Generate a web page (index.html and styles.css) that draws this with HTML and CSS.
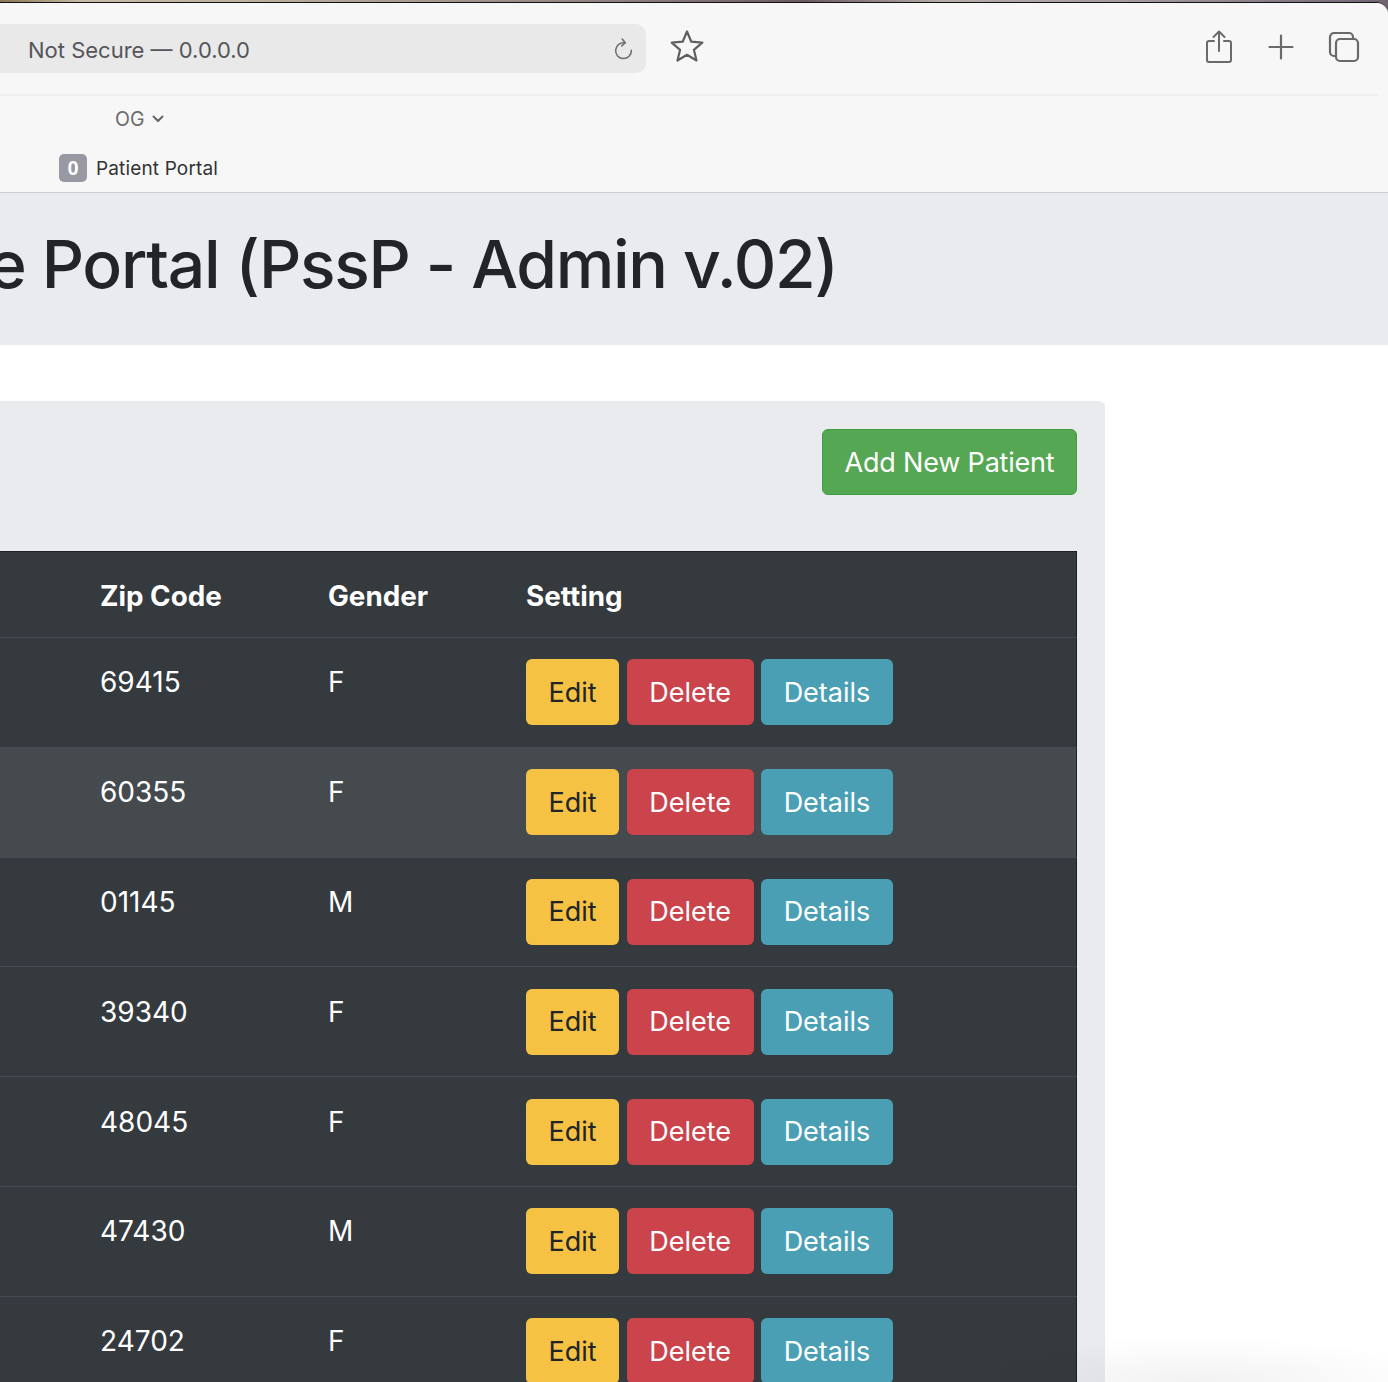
FILE: index.html
```html
<!DOCTYPE html>
<html lang="en">
<head>
<meta charset="utf-8">
<title>Patient Portal</title>
<link rel="stylesheet" href="styles.css">
</head>
<body>
<div class="wallpaper">
  <div class="window">
    <header class="chrome">
      <div class="toolbar">
        <div class="address">
          <span class="address-text">Not Secure — 0.0.0.0</span>
          <svg class="reload" viewBox="0 0 24 28" width="21" height="25" fill="none" stroke="#6e6e6e" stroke-width="1.8" stroke-linecap="round" stroke-linejoin="round"><path d="M13.5 6.500A9 9 0 1 0 21 15"/><path d="M10.5 2l3.500 4.300-4 3.600"/></svg>
        </div>
        <svg class="star" viewBox="0 0 34 34" width="34" height="34" fill="none" stroke="#5f5f5f" stroke-width="2.2" stroke-linejoin="round"><path d="M17 2.500l4.300 10.200 11 .9-8.400 7.200 2.600 10.700L17 25.800l-9.500 5.700 2.600-10.700-8.400-7.200 11-.9z"/></svg>
        <div class="tools">
          <svg viewBox="0 0 28 34" width="28" height="34" fill="none" stroke="#6a6a6a" stroke-width="2" stroke-linecap="round" stroke-linejoin="round"><path d="M9 11H4a2 2 0 0 0-2 2v17a2 2 0 0 0 2 2h20a2 2 0 0 0 2-2V13a2 2 0 0 0-2-2h-5"/><path d="M14 21V2M8.500 7L14 1.500 19.500 7"/></svg>
          <svg viewBox="0 0 26 26" width="26" height="26" fill="none" stroke="#6a6a6a" stroke-width="2.200" stroke-linecap="round"><path d="M13 1.500v23M1.500 13h23"/></svg>
          <svg class="tabs-icon" viewBox="0 0 32 32" width="32" height="32" fill="none" stroke="#6a6a6a" stroke-width="2.200" stroke-linejoin="round"><rect x="8" y="8" width="22" height="22" rx="4"/><path d="M8 25H6a4 4 0 0 1-4-4V6a4 4 0 0 1 4-4h15a4 4 0 0 1 4 4v2"/></svg>
        </div>
      </div>
      <div class="bookmarks">
        <span>OG</span>
        <svg viewBox="0 0 12 8" width="12" height="8" fill="none" stroke="#666" stroke-width="2" stroke-linecap="round" stroke-linejoin="round"><path d="M1.500 1.500L6 6l4.500-4.500"/></svg>
      </div>
      <div class="tabrow">
        <span class="badge">0</span>
        <span class="tabtitle">Patient Portal</span>
      </div>
    </header>
    <section class="jumbotron">
      <h1>e Portal (PssP - Admin v.02)</h1>
    </section>
    <main class="card">
      <div class="card-actions">
        <button class="btn btn-green">Add New Patient</button>
      </div>
      <table class="patients">
        <colgroup><col class="c-zip"><col class="c-gender"><col class="c-setting"></colgroup>
        <thead>
          <tr><th>Zip Code</th><th>Gender</th><th>Setting</th></tr>
        </thead>
        <tbody>
          <tr><td>69415</td><td>F</td><td class="cell-actions"><div class="actions"><button class="btn btn-edit">Edit</button><button class="btn btn-delete">Delete</button><button class="btn btn-details">Details</button></div></td></tr>
          <tr class="striped"><td>60355</td><td>F</td><td class="cell-actions"><div class="actions"><button class="btn btn-edit">Edit</button><button class="btn btn-delete">Delete</button><button class="btn btn-details">Details</button></div></td></tr>
          <tr><td>01145</td><td>M</td><td class="cell-actions"><div class="actions"><button class="btn btn-edit">Edit</button><button class="btn btn-delete">Delete</button><button class="btn btn-details">Details</button></div></td></tr>
          <tr><td>39340</td><td>F</td><td class="cell-actions"><div class="actions"><button class="btn btn-edit">Edit</button><button class="btn btn-delete">Delete</button><button class="btn btn-details">Details</button></div></td></tr>
          <tr><td>48045</td><td>F</td><td class="cell-actions"><div class="actions"><button class="btn btn-edit">Edit</button><button class="btn btn-delete">Delete</button><button class="btn btn-details">Details</button></div></td></tr>
          <tr><td>47430</td><td>M</td><td class="cell-actions"><div class="actions"><button class="btn btn-edit">Edit</button><button class="btn btn-delete">Delete</button><button class="btn btn-details">Details</button></div></td></tr>
          <tr><td>24702</td><td>F</td><td class="cell-actions"><div class="actions"><button class="btn btn-edit">Edit</button><button class="btn btn-delete">Delete</button><button class="btn btn-details">Details</button></div></td></tr>
        </tbody>
      </table>
    </main>
    <div class="dock-shadow"></div>
  </div>
</div>
</body>
</html>
```
FILE: styles.css
```css
* { box-sizing: border-box; }
html, body { margin: 0; height: 100%; overflow: hidden; background: #fff; }
body { font-family: Inter, "Liberation Sans", sans-serif; }
.wallpaper { height: 1382px; padding-top: 2px; overflow: hidden; background: linear-gradient(90deg, #8a7650 0, #c8bca8 6%, #b9ad9c 20%, #8d7f80 45%, #6d5a5f 58%, #b5aeaa 68%, #a29aa0 82%, #6f6470 100%); }
.window { position: relative; height: 1380px; background: #fff; border-top: 1px solid #111; border-top-right-radius: 12px; overflow: hidden; }
.chrome { height: 190px; background: #f7f7f7; border-bottom: 1px solid #cfcfd1; padding-right: 10px; }
.toolbar { height: 93px; display: flex; align-items: center; border-bottom: 2px solid #eeeeee; padding-bottom: 2px; }
.address { width: 646px; height: 49px; margin-top: 1px; background: #e9e9e9; border-radius: 0 10px 10px 0; display: flex; align-items: center; justify-content: space-between; padding: 0 12px 0 28px; }
.address-text { font-size: 22px; color: #55555a; margin-top: 3px; }
.reload { margin-top: 2px; }
.star { margin-left: 24px; margin-top: -3px; }
.tools { margin-left: auto; display: flex; align-items: center; gap: 34.500px; padding-right: 18px; margin-top: -2px; }
.tabs-icon { margin-top: 1px; }
.bookmarks { height: 48px; padding-left: 115px; display: flex; align-items: center; gap: 8px; color: #6b6b6b; font-size: 19.500px; margin-top: -1px; margin-bottom: 1px; }
.tabrow { height: 48px; padding-left: 59px; display: flex; align-items: center; gap: 9px; }
.badge { width: 28px; height: 28px; background: #9898a3; color: #fff; font-family: "Liberation Sans", sans-serif; font-weight: 700; font-size: 20px; border-radius: 5px; display: flex; align-items: center; justify-content: center; }
.tabtitle { font-size: 19px; letter-spacing: .15px; color: #333; }
.jumbotron { height: 152px; background: #eaebef; overflow: hidden; display: flex; align-items: center; }
.jumbotron h1 { margin: 0 0 8px -12px; font-size: 66px; font-weight: 500; letter-spacing: -1.310px; color: #212529; white-space: nowrap; line-height: 1.2; }
.card { width: 1105px; margin-top: 56px; height: 1100px; background: #eaebef; border-radius: 0 6px 6px 0; padding: 28px 28px 0 0; }
.card-actions { display: flex; justify-content: flex-end; height: 122px; }
.btn { height: 66px; border: 1px solid transparent; border-radius: 6px; font-family: inherit; font-size: 27px; line-height: 1; padding: 0 21.500px; color: #fff; }
.btn-green { background: #55a754; border-color: #3f9e3f; letter-spacing: -.2px; }
.patients { width: 1076.500px; table-layout: fixed; border-collapse: collapse; background: #353a3e; color: #fff; font-size: 28px; border-right: 1px solid #1d2124; border-top: 1px solid #1d2124; }
.c-zip { width: 312px; }
.c-gender { width: 198px; }
.c-setting { width: 566.500px; }
.patients th, .patients td { padding: 24.400px 16px 0; border-top: 1px solid #454a50; text-align: left; vertical-align: top; line-height: 41px; font-weight: 400; }
.patients .cell-actions { padding: 21.400px 16px; }
.patients th { font-weight: 700; font-size: 27.800px; padding-top: 24px; padding-bottom: 20px; border-top: 0; }
.patients th:first-child, .patients td:first-child { padding-left: 100px; }
.striped { background: #454a4f; }
.actions { display: flex; gap: 7.400px; }
.btn-edit { background: #f6c244; color: #212529; }
.btn-delete { background: #cb444c; padding: 0 21.700px; }
.btn-details { background: #4a9fb5; }
.dock-shadow { position: absolute; left: 1000px; right: 0; bottom: 0; height: 50px; background: radial-gradient(ellipse 260px 46px at 50% 100%, rgba(0,0,0,.05), rgba(0,0,0,0)); pointer-events: none; }
```
